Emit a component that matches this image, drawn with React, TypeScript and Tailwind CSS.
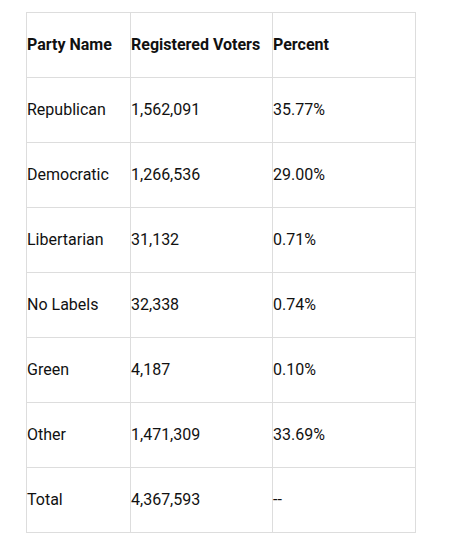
const rows = [
  ['Republican', '1,562,091', '35.77%'],
  ['Democratic', '1,266,536', '29.00%'],
  ['Libertarian', '31,132', '0.71%'],
  ['No Labels', '32,338', '0.74%'],
  ['Green', '4,187', '0.10%'],
  ['Other', '1,471,309', '33.69%'],
  ['Total', '4,367,593', '--'],
];

export default function App() {
  return (
    <div className="bg-white min-h-screen pt-[12px] pl-[26px] font-['Roboto',sans-serif] text-[16px] text-[#111]">
      <table className="border-collapse table-fixed w-[390px]">
        <colgroup>
          <col className="w-[104px]" />
          <col className="w-[142px]" />
          <col />
        </colgroup>
        <thead>
          <tr className="h-[65px]">
            <th className="border border-[#ddd] p-0 text-left font-bold align-middle">Party Name</th>
            <th className="border border-[#ddd] p-0 text-left font-bold align-middle">Registered Voters</th>
            <th className="border border-[#ddd] p-0 text-left font-bold align-middle">Percent</th>
          </tr>
        </thead>
        <tbody>
          {rows.map((r) => (
            <tr key={r[0]} className="h-[65px]">
              {r.map((c, i) => (
                <td key={i} className="border border-[#ddd] p-0 align-middle">{c}</td>
              ))}
            </tr>
          ))}
        </tbody>
      </table>
    </div>
  );
}
